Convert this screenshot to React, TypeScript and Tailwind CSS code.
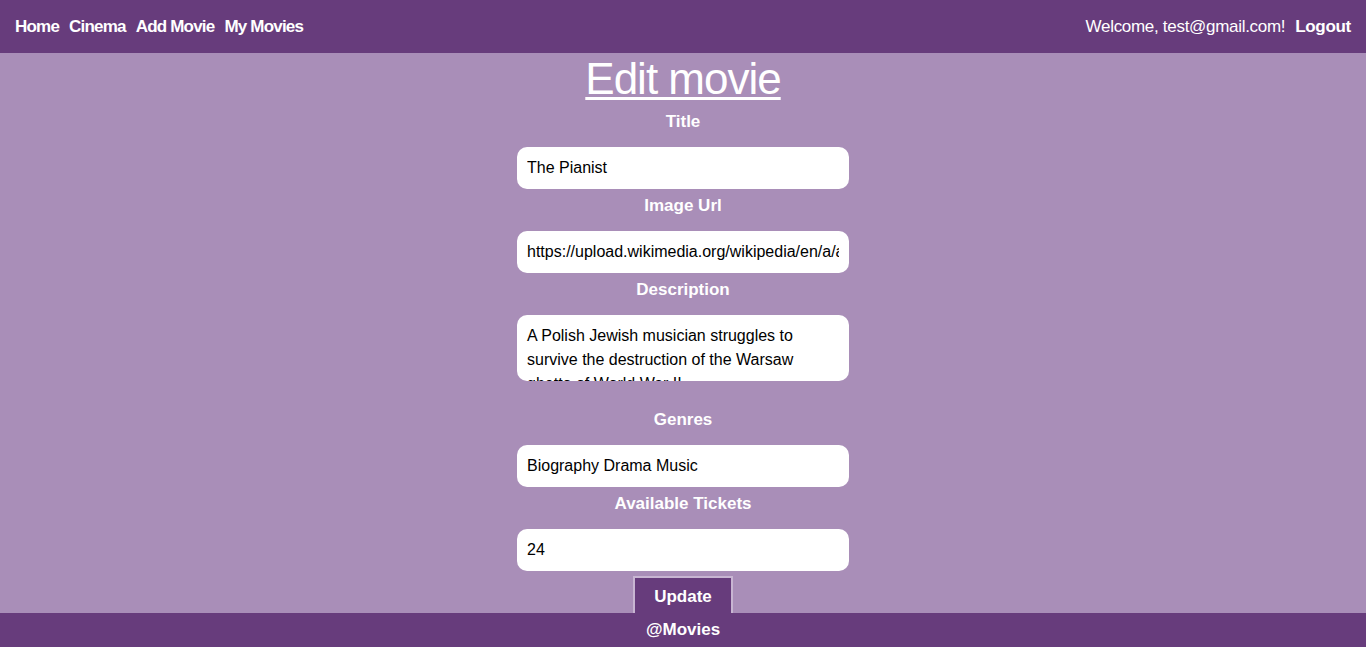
import React from "react";

const fields = [
  { label: "Title", value: "The Pianist" },
  {
    label: "Image Url",
    value:
      "https://upload.wikimedia.org/wikipedia/en/a/a6/The_Pianist_movie.jpg",
  },
];

const fields2 = [
  { label: "Genres", value: "Biography Drama Music" },
  { label: "Available Tickets", value: "24" },
];

const inputCls =
  "w-[332px] h-[42px] rounded-[10px] bg-white px-[10px] text-[16px] text-black outline-none";

const Label = ({ text }: { text: string }) => (
  <label className="block h-5 leading-5 mt-[7px] mb-[15px] text-[17px] font-bold text-white">
    {text}
  </label>
);

export default function App() {
  return (
    <div
      className="h-[647px] flex flex-col bg-[#a98eb8]"
      style={{ fontFamily: '"Liberation Sans", Arial, sans-serif' }}
    >
      <header className="h-[53px] shrink-0 bg-[#673c7c] flex items-center justify-between px-[15px] text-white text-[17px]">
        <nav className="flex gap-[10px] font-bold tracking-[-0.8px]">
          <a>Home</a>
          <a>Cinema</a>
          <a>Add Movie</a>
          <a>My Movies</a>
        </nav>
        <div className="flex gap-[10px] tracking-[-0.3px]">
          <span>Welcome, test@gmail.com!</span>
          <a className="font-bold">Logout</a>
        </div>
      </header>

      <main className="flex-1 overflow-hidden flex flex-col items-center text-center">
        <h1 className="h-[52px] leading-[52px] text-[44px] text-white underline decoration-[3px] underline-offset-[3px] tracking-[-1px]">
          Edit movie
        </h1>
        {fields.map((f) => (
          <div key={f.label} className="flex flex-col items-center">
            <Label text={f.label} />
            <input className={inputCls} defaultValue={f.value} />
          </div>
        ))}
        <div className="flex flex-col items-center">
          <Label text="Description" />
          <textarea
            className="w-[332px] h-[66px] rounded-[10px] bg-white px-[10px] py-[9px] text-[16px] leading-6 text-black resize-none overflow-hidden outline-none mb-[22px] block"
            defaultValue="A Polish Jewish musician struggles to survive the destruction of the Warsaw ghetto of World War II."
          />
        </div>
        {fields2.map((f) => (
          <div key={f.label} className="flex flex-col items-center">
            <Label text={f.label} />
            <input className={inputCls} defaultValue={f.value} />
          </div>
        ))}
        <button className="mt-[5px] w-[100px] h-[42px] shrink-0 bg-[#673c7c] border-2 border-[#c8b5d2] text-white font-bold text-[17px]">
          Update
        </button>
      </main>

      <footer className="h-[34px] shrink-0 bg-[#673c7c] flex items-center justify-center text-white font-bold text-[17px]">
        @Movies
      </footer>
    </div>
  );
}
